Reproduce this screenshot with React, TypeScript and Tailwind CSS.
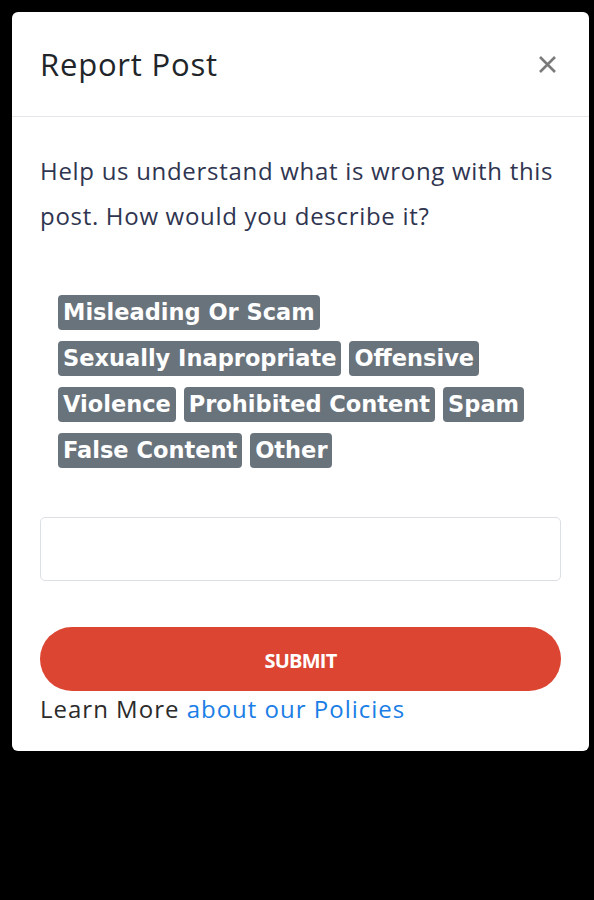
import React from 'react';

const reasons = [
  'Misleading Or Scam',
  'Sexually Inapropriate',
  'Offensive',
  'Violence',
  'Prohibited Content',
  'Spam',
  'False Content',
  'Other',
];

const App: React.FC = () => {
  return (
    <div
      className="min-h-screen w-full bg-black pt-[12px] pl-[12px]"
      style={{ fontFamily: '"Open Sans", "Noto Sans", sans-serif' }}
    >
      <div className="w-[577px] bg-white rounded-[6px]">
        {/* Header */}
        <div className="h-[105px] flex items-center justify-between pl-[28px] pr-[32px] border-b border-[#e3e5e8]">
          <h1 className="text-[31px] text-[#212529] tracking-[0.8px]">Report Post</h1>
          <button className="w-[19px] h-[19px] text-[#7a7a7a]" aria-label="Close">
            <svg viewBox="0 0 19 19" className="w-full h-full" fill="none" stroke="currentColor" strokeWidth="2.6" strokeLinecap="butt">
              <path d="M2 2 L17 17 M17 2 L2 17" />
            </svg>
          </button>
        </div>

        {/* Body */}
        <div className="px-[28px] pt-[31px] pb-[24px]">
          <p className="text-[24px] leading-[45px] tracking-[0.7px] text-[#2f3550]">
            Help us understand what is wrong with this post. How would you describe it?
          </p>

          <div className="mt-[57px] pl-[18px] pr-[20px] flex flex-wrap gap-x-[8px] gap-y-[11px]">
            {reasons.map((r) => (
              <span
                key={r}
                className="h-[35px] px-[5px] pt-[1px] flex items-center rounded-[4px] bg-[#69737c] text-white font-bold text-[22.5px]"
                style={{ fontFamily: '"DejaVu Sans", sans-serif' }}
              >
                {r}
              </span>
            ))}
          </div>

          <input
            type="text"
            className="mt-[49px] block w-full h-[64px] rounded-[5px] border border-[#dcdfe3] outline-none px-3"
          />

          <button className="mt-[46px] w-full h-[64px] pt-[3px] rounded-full bg-[#dc4532] text-white font-bold text-[20px] tracking-[-0.8px]">
            SUBMIT
          </button>

          <p className="text-[24px] leading-[36px] tracking-[1px] text-[#2b2b2b]">
            Learn More <a className="text-[#1a7ee6]">about our Policies</a>
          </p>
        </div>
      </div>
    </div>
  );
};

export default App;
